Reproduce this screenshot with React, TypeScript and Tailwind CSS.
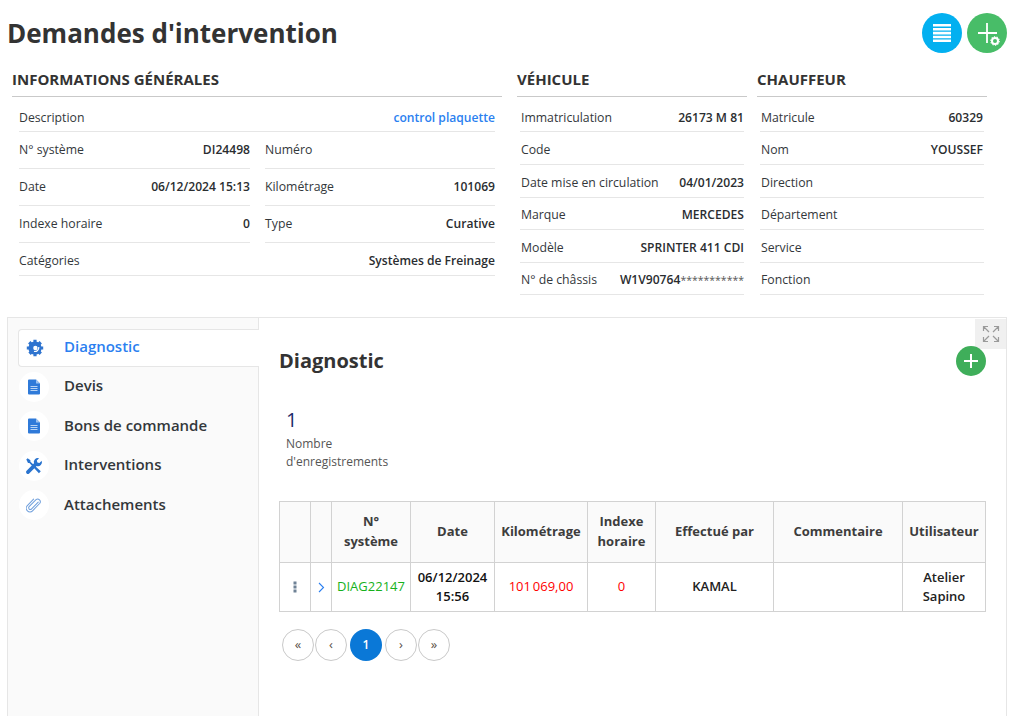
import React from "react";

const F = "font-['Open_Sans',sans-serif]";

function Row({ l, v, h, cls = "", vcls = "text-[#2a2d30]" }: { l: string; v?: React.ReactNode; h: string; cls?: string; vcls?: string }) {
  return (
    <div className={`flex items-center justify-between border-b border-[#e6e6e6] text-[12.25px] ${h} ${cls}`}>
      <span className="text-[#33373b]">{l}</span>
      {v && <span className={`text-[12.1px] font-semibold ${vcls}`}>{v}</span>}
    </div>
  );
}

function Head({ t }: { t: string }) {
  return (
    <div className="h-[27px] border-b border-[#c9c9c9] text-[15px] font-bold leading-[18px] text-[#333]">{t}</div>
  );
}

function DocIcon() {
  return (
    <svg width="12" height="16" viewBox="0 0 12 16">
      <path d="M0 1.5A1 1 0 0 1 1 .5h7l4 4v10a1 1 0 0 1-1 1H1a1 1 0 0 1-1-1z" fill="#2f7ad9" />
      <path d="M8 .5v4h4z" fill="#9cc2f0" />
      <path d="M2.5 7.5h7M2.5 9.5h7M2.5 11.5h7" stroke="#b9d4f5" strokeWidth="1" />
    </svg>
  );
}

function GearIcon() {
  return (
    <svg width="18" height="18" viewBox="0 0 18 18">
      <circle cx="9" cy="9" r="6.6" fill="#2f74cf" />
      <path d="M7.4 0.8h3.2v3H7.4zM7.4 14.2h3.2v3H7.4zM0.8 7.4h3v3.2h-3zM14.2 7.4h3v3.2h-3zM2.1 4.4l2.3-2.3 2 2-2.3 2.3zM11.6 13.9l2.3-2.3 2 2-2.3 2.3zM13.6 2.1l2.3 2.3-2 2-2.3-2.3zM4.4 11.6l2.3 2.3-2 2-2.3-2.3z" fill="#2f74cf" />
      <circle cx="9.4" cy="9" r="2.2" fill="#fff" />
      <path d="M8 12.4a4 4 0 0 0 4.8-4.4" fill="none" stroke="#fff" strokeWidth="1.2" />
    </svg>
  );
}

function WrenchIcon() {
  return (
    <svg width="18" height="18" viewBox="0 0 18 18">
      <path d="M1.3 2.6 2.6 1.3l2.8 1.9v1.5l10.4 9.6-1.9 1.9L4.4 6.1H3z" fill="#2a74cf" />
      <path d="M16.7 3.8 14.4 6.1l-2-.6-.6-2 2.3-2.3A4 4 0 0 0 9 6.3L1.6 13.8a1.8 1.8 0 0 0 2.6 2.6L11.6 9a4 4 0 0 0 5.1-5.2z" fill="#2a74cf" />
    </svg>
  );
}

function ClipIcon() {
  return (
    <svg width="16" height="16" viewBox="0 0 18 18" fill="none" stroke="#6f9fdc" strokeWidth="1.2" strokeLinecap="round">
      <path d="M15 5.5 7.2 13.6a2 2 0 0 1-3-2.8l8.2-8.3a3.2 3.2 0 0 1 4.5 4.4l-8.6 8.9a4.3 4.3 0 0 1-6.2-6L9.5 2" transform="translate(-0.5 0.5) scale(0.95)" />
    </svg>
  );
}

function NavItem({ icon, label, active, lcls = "-mt-[3px]" }: { icon: React.ReactNode; label: string; active?: boolean; lcls?: string }) {
  if (active) {
    return (
      <div className="flex h-[38px] items-center rounded-l-[4px] border border-r-0 border-[#e6e6e6] bg-white">
        <div className="ml-[1px] flex w-[30px] justify-center">{icon}</div>
        <span className="ml-[14px] -mt-[4px] text-[15px] font-semibold text-[#2b7ff0]">{label}</span>
      </div>
    );
  }
  return (
    <div className="flex h-[39.5px] items-center">
      <div className="ml-[1px] flex h-[30px] w-[30px] items-center justify-center rounded-full bg-white">{icon}</div>
      <span className={`ml-[15px] text-[15px] font-semibold text-[#33373b] ${lcls}`}>{label}</span>
    </div>
  );
}

const colW = ["w-[31px]", "w-[21px]", "w-[79px]", "w-[84px]", "w-[93px]", "w-[68px]", "w-[118px]", "w-[129px]", "w-[83px]"];

function Th({ i, children }: { i: number; children?: React.ReactNode }) {
  return (
    <th className={`${colW[i]} border border-[#d2d2d2] bg-[#fafafa] px-[2px] pb-[3px] text-center text-[13px] font-bold leading-[20px] text-[#3d3d3d]`}>
      {children}
    </th>
  );
}
function Td({ children, cls = "font-semibold" }: { children?: React.ReactNode; cls?: string }) {
  return (
    <td className={`border border-[#d2d2d2] px-[1px] text-center text-[13px] leading-[19.5px] ${cls}`}>{children}</td>
  );
}

function Pg({ children, cls = "" }: { children: React.ReactNode; cls?: string }) {
  return (
    <div className={`flex h-[32px] w-[32px] items-center justify-center rounded-full border border-[#c9c9c9] bg-white text-[13px] text-[#5a5048] ${cls}`}>
      {children}
    </div>
  );
}

export default function App() {
  return (
    <div className={`${F} h-[716px] w-[1016px] overflow-hidden bg-white`}>
      <div className="flex h-[64px] items-start justify-between pl-[7px] pr-[9px] pt-[13px]">
        <h1 className="text-[26px] font-bold leading-[41px] text-[#333]">Demandes d'intervention</h1>
        <div className="flex gap-[5px]">
          <div className="flex h-[40px] w-[40px] items-center justify-center rounded-full bg-[#03b0f0]">
            <svg width="18" height="18" viewBox="0 0 18 18" fill="#fff">
              <path d="M0 0h18v2.6H0zM0 3.9h18v2.6H0zM0 7.8h18v2.6H0zM0 11.7h18v2.6H0zM0 15.6h18v2.4H0z" />
            </svg>
          </div>
          <div className="flex h-[40px] w-[40px] items-center justify-center rounded-full bg-[#48bd68]">
            <svg width="28" height="28" viewBox="0 0 28 28" fill="none">
              <path d="M5 14h19M14 4v20" stroke="#fff" strokeWidth="1.8" />
              <circle cx="22" cy="22" r="6" fill="#48bd68" />
              <circle cx="22" cy="22" r="3" stroke="#fff" strokeWidth="2" />
              <circle cx="22" cy="22" r="4.2" stroke="#fff" strokeWidth="1.2" strokeDasharray="1.3 1.3" />
            </svg>
          </div>
        </div>
      </div>

      <div className="flex h-[240px] items-start pl-[12px] pt-[6px]">
        <section className="w-[490px]">
          <Head t="INFORMATIONS GÉNÉRALES" />
          <div className="pl-[7px] pr-[7px]">
            <Row l="Description" v="control plaquette" h="h-[35px]" cls="pt-[9px]" vcls="text-[#2b7ff0]" />
            <div className="grid grid-cols-[231px_230px] gap-x-[15px]">
              <Row l="N° système" v="DI24498" h="h-[37px]" />
              <Row l="Numéro" h="h-[37px]" />
              <Row l="Date" v="06/12/2024 15:13" h="h-[37px]" />
              <Row l="Kilométrage" v="101069" h="h-[37px]" />
              <Row l="Indexe horaire" v="0" h="h-[37px]" />
              <Row l="Type" v="Curative" h="h-[37px]" />
            </div>
            <Row l="Catégories" v="Systèmes de Freinage" h="h-[33px]" cls="pt-[5px]" />
          </div>
        </section>
        <section className="ml-[15px] w-[230px]">
          <Head t="VÉHICULE" />
          <div className="pl-[3px] pr-[3px]">
            <Row l="Immatriculation" v="26173 M 81" h="h-[35px]" cls="pl-px pt-[9px]" />
            <Row l="Code" h="h-[33px]" cls="pl-px pt-[4px]" />
            <Row l="Date mise en circulation" v="04/01/2023" h="h-[33px]" cls="pl-px pt-[4px]" />
            <Row l="Marque" v="MERCEDES" h="h-[32px]" cls="pl-px pt-[4px]" />
            <Row l="Modèle" v="SPRINTER 411 CDI" h="h-[33px]" cls="pl-px pt-[4px]" />
            <Row
              l="N° de châssis"
              v={<>W1V90764<span className="text-[10.5px] font-normal text-[#555]">***********</span></>}
              h="h-[32px]"
              cls="pl-px pt-[4px]"
            />
          </div>
        </section>
        <section className="ml-[10px] w-[230px]">
          <Head t="CHAUFFEUR" />
          <div className="pl-[3px] pr-[3px]">
            <Row l="Matricule" v="60329" h="h-[35px]" cls="px-px pt-[9px]" />
            <Row l="Nom" v="YOUSSEF" h="h-[33px]" cls="px-px pt-[4px]" />
            <Row l="Direction" h="h-[33px]" cls="px-px pt-[4px]" />
            <Row l="Département" h="h-[32px]" cls="px-px pt-[4px]" />
            <Row l="Service" h="h-[33px]" cls="px-px pt-[4px]" />
            <Row l="Fonction" h="h-[32px]" cls="px-px pt-[4px]" />
          </div>
        </section>
      </div>

      <div className="relative mt-[13px] ml-[7px] flex h-[400px] w-[1000px] border border-[#e6e6e6]">
        <aside className="h-full w-[251px] shrink-0 border-r border-[#e6e6e6] bg-[#fafafa] pl-[10px] pt-[11px]">
          <div className="-mr-[1px]">
            <NavItem active icon={<GearIcon />} label="Diagnostic" />
            <NavItem icon={<DocIcon />} label="Devis" />
            <NavItem icon={<DocIcon />} label="Bons de commande" lcls="-mt-[2px]" />
            <NavItem icon={<WrenchIcon />} label="Interventions" />
            <NavItem icon={<ClipIcon />} label="Attachements" lcls="-mt-[2px]" />
          </div>
        </aside>
        <main className="relative flex-1 pl-[20px] pr-[20px]">
          <div className="flex h-[89px] items-start justify-between pt-[29px]">
            <h2 className="text-[20px] font-bold leading-[28px] text-[#333]">Diagnostic</h2>
            <div className="z-10 -mt-[1px] flex h-[30px] w-[30px] items-center justify-center rounded-full bg-[#3fae5a]">
              <svg width="16" height="16" viewBox="0 0 16 16"><path d="M1 8h14M8 1v14" stroke="#fff" strokeWidth="2" /></svg>
            </div>
          </div>
          <div className="pl-[7px]">
            <div className="text-[20px] leading-[26px] text-[#1d2b6b]">1</div>
            <div className="mt-[2px] w-[110px] text-[12px] leading-[18px] text-[#555]">
              Nombre<br />d'enregistrements
            </div>
          </div>
          <table className="mt-[30px] w-[706px] table-fixed border-collapse">
            <thead>
              <tr className="h-[61px]">
                <Th i={0} />
                <Th i={1} />
                <Th i={2}>N°<br />système</Th>
                <Th i={3}>Date</Th>
                <Th i={4}>Kilométrage</Th>
                <Th i={5}>Indexe<br />horaire</Th>
                <Th i={6}>Effectué par</Th>
                <Th i={7}>Commentaire</Th>
                <Th i={8}>Utilisateur</Th>
              </tr>
            </thead>
            <tbody>
              <tr className="h-[49px]">
                <Td>
                  <svg className="mx-auto" width="4" height="12" viewBox="0 0 4 12" fill="#6f8296">
                    <rect x="0.5" y="0.5" width="3" height="3" /><rect x="0.5" y="4.5" width="3" height="3" /><rect x="0.5" y="8.5" width="3" height="3" />
                  </svg>
                </Td>
                <Td>
                  <svg className="mx-auto" width="7" height="11" viewBox="0 0 7 11" fill="none"><path d="M1 1l4.5 4.5L1 10" stroke="#2b7ff0" strokeWidth="1.1" /></svg>
                </Td>
                <Td cls="font-medium text-[#17b11c]">DIAG22147</Td>
                <Td cls="font-semibold text-[#111]">06/12/2024<br />15:56</Td>
                <Td cls="font-normal text-[#ff0000] [word-spacing:-1.5px]">101 069,00</Td>
                <Td cls="font-medium text-[#ff0000]">0</Td>
                <Td cls="font-semibold text-[#222]">KAMAL</Td>
                <Td />
                <Td cls="font-semibold text-[#222]">Atelier<br />Sapino</Td>
              </tr>
            </tbody>
          </table>
          <div className="mt-[17px] ml-[3px] flex items-center">
            <Pg>«</Pg>
            <Pg cls="ml-[1px]">‹</Pg>
            <div className="ml-[3px] flex h-[32px] w-[32px] items-center justify-center rounded-full bg-[#0a78d7] text-[12px] font-semibold text-white">1</div>
            <Pg cls="ml-[3px]">›</Pg>
            <Pg cls="ml-[1px]">»</Pg>
          </div>
        </main>
        <div className="absolute right-0 top-[1px] flex h-[30px] w-[31px] items-center justify-center bg-[#f0f0f0]">
          <svg width="18" height="18" viewBox="0 0 18 18" fill="none" stroke="#9a9a9a" strokeWidth="1.2">
            <path d="M1.5 6V1.5H6M1.5 1.5 7 7M12 1.5h4.5V6M16.5 1.5 11 7M1.5 12v4.5H6M1.5 16.5 7 11M12 16.5h4.5V12M16.5 16.5 11 11" />
          </svg>
        </div>
      </div>
    </div>
  );
}
